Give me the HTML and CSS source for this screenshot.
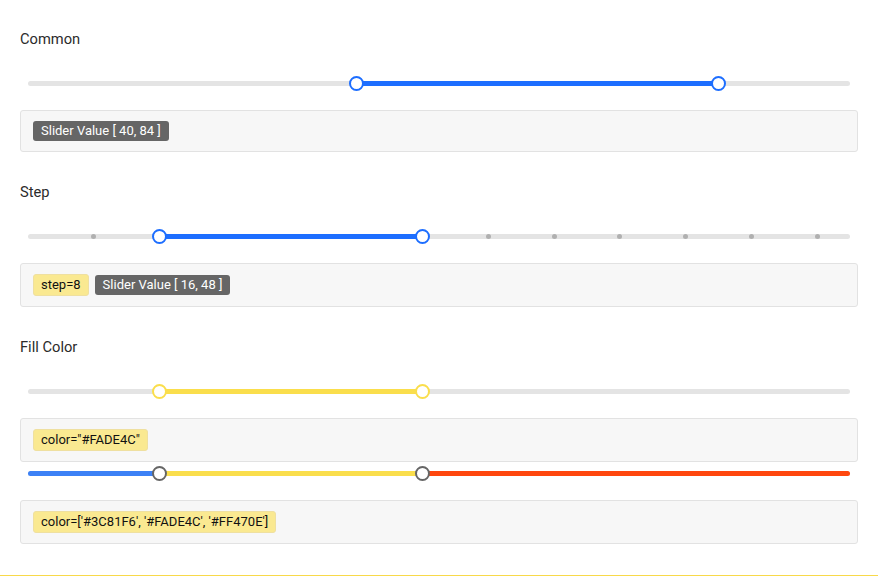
FILE: index.html
```html
<!DOCTYPE html>
<html>
<head>
<meta charset="utf-8">
<link rel="stylesheet" href="styles.css">
</head>
<body>
<div class="page">
  <section class="demo">
    <h3 class="title">Common</h3>
    <div class="slider">
      <div class="track">
        <div class="fill blue" style="left:40%;width:44%"></div>
        <span class="handle h-blue" style="left:40%"></span>
        <span class="handle h-blue" style="left:84%"></span>
      </div>
    </div>
    <div class="panel">
      <span class="tag dark">Slider Value [ 40, 84 ]</span>
    </div>
  </section>

  <section class="demo">
    <h3 class="title">Step</h3>
    <div class="slider">
      <div class="track">
        <span class="dot" style="left:8%"></span>
        <span class="dot" style="left:56%"></span>
        <span class="dot" style="left:64%"></span>
        <span class="dot" style="left:72%"></span>
        <span class="dot" style="left:80%"></span>
        <span class="dot" style="left:88%"></span>
        <span class="dot" style="left:96%"></span>
        <div class="fill blue" style="left:16%;width:32%"></div>
        <span class="handle h-blue" style="left:16%"></span>
        <span class="handle h-blue" style="left:48%"></span>
      </div>
    </div>
    <div class="panel">
      <span class="tag yellow">step=8</span>
      <span class="tag dark">Slider Value [ 16, 48 ]</span>
    </div>
  </section>

  <section class="demo">
    <h3 class="title">Fill Color</h3>
    <div class="slider">
      <div class="track">
        <div class="fill sun" style="left:16%;width:32%"></div>
        <span class="handle h-sun" style="left:16%"></span>
        <span class="handle h-sun" style="left:48%"></span>
      </div>
    </div>
    <div class="panel">
      <span class="tag yellow">color="#FADE4C"</span>
    </div>
    <div class="slider slider-tight">
      <div class="track">
        <div class="fill sky" style="left:0;width:16%"></div>
        <div class="fill sun" style="left:16%;width:32%"></div>
        <div class="fill fire" style="left:48%;width:52%"></div>
        <span class="handle h-grey" style="left:16%"></span>
        <span class="handle h-grey" style="left:48%"></span>
      </div>
    </div>
    <div class="panel">
      <span class="tag yellow">color=['#3C81F6', '#FADE4C', '#FF470E']</span>
    </div>
  </section>
</div>
</body>
</html>
```

FILE: styles.css
```css
* { box-sizing: border-box; }
html, body { margin: 0; padding: 0; background: #fff; }
body {
  font-family: Roboto, "Helvetica Neue", Arial, sans-serif;
  color: #333;
}
.page {
  height: 576px;
  padding: 28px 20px 0;
  border-bottom: 1px solid #f8d94a;
}
.demo + .demo { margin-top: 29px; }
.title {
  margin: 0;
  font-size: 14.7px;
  font-weight: 400;
  line-height: 22px;
  color: #2b2b2b;
}
.slider {
  margin: 26px 8px 19px;
  height: 15px;
  display: flex;
  align-items: center;
}
.slider-tight { margin-top: 4px; margin-bottom: 19px; }
.track {
  position: relative;
  flex: 1;
  height: 5px;
  border-radius: 2.5px;
  background: #e4e4e4;
}
.fill {
  position: absolute;
  top: 0;
  height: 5px;
}
.blue { background: #1d6eff; }
.sun { background: #fade4c; }
.sky { background: #3c81f6; border-radius: 2.5px 0 0 2.5px; }
.fire { background: #ff470e; border-radius: 0 2.5px 2.5px 0; }
.dot {
  position: absolute;
  top: 0;
  width: 5px;
  height: 5px;
  margin-left: -2.5px;
  border-radius: 50%;
  background: #b0b0b0;
}
.handle {
  position: absolute;
  top: 50%;
  width: 15px;
  height: 15px;
  margin: -7.5px 0 0 -7.5px;
  border-radius: 50%;
  background: #fff;
  border: 2px solid #1d6eff;
  z-index: 1;
}
.h-blue { border-color: #1d6eff; }
.h-sun { border-color: #fade4c; }
.h-grey { border-color: #666; }
.panel {
  display: flex;
  align-items: center;
  gap: 6px;
  padding: 10px 12px;
  background: #f7f7f7;
  border: 1px solid #e2e2e2;
  border-radius: 3px;
}
.tag {
  display: inline-block;
  font-size: 13px;
  line-height: 20px;
  padding: 0 7px;
  border-radius: 3px;
}
.dark { background: #666; color: #fff; padding: 0 8px; }
.yellow { background: #fae991; color: #111; border: 1px solid #efe0a0; }
```
